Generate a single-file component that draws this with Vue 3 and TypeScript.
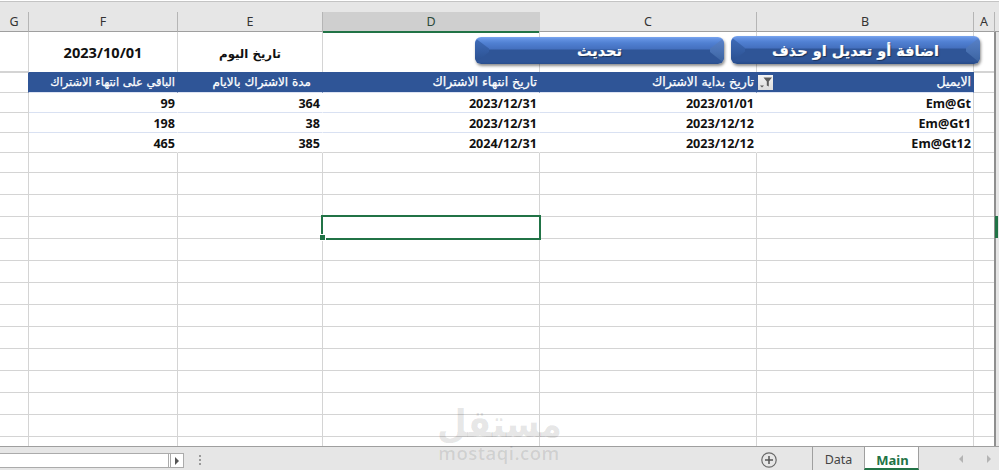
<script setup lang="ts">
interface Row {
  height: number
  kind: 'title' | 'head' | 'data' | 'last' | 'grid'
  cells: string[]
}

const columns: string[] = ['G', 'F', 'E', 'D', 'C', 'B', 'A']
const widths: number[] = [29, 149, 145, 217, 217, 217, 21]

const rows: Row[] = [
  { height: 40, kind: 'title', cells: ['', '2023/10/01', 'تاريخ اليوم', '', '', '', ''] },
  { height: 21, kind: 'head', cells: ['', 'الباقي على انتهاء الاشتراك', 'مدة الاشتراك بالايام', 'تاريخ انتهاء الاشتراك', 'تاريخ بداية الاشتراك', 'الايميل', ''] },
  { height: 20, kind: 'data', cells: ['', '99', '364', '2023/12/31', '2023/01/01', 'Em@Gt', ''] },
  { height: 20, kind: 'data', cells: ['', '198', '38', '2023/12/31', '2023/12/12', 'Em@Gt1', ''] },
  { height: 20, kind: 'last', cells: ['', '465', '385', '2024/12/31', '2023/12/12', 'Em@Gt12', ''] },
  { height: 20, kind: 'grid', cells: Array(7).fill('') },
  ...Array.from({ length: 13 }, (): Row => ({ height: 22, kind: 'grid', cells: Array(7).fill('') })),
]

const gridColumns = widths.map((w) => `${w}px`).join(' ')
const gridRows = rows.map((r) => `${r.height}px`).join(' ')
const selectedRow = 8
const selectedCol = 3
</script>

<template>
  <div class="excel">
    <div class="top-strip"></div>

    <div class="col-headers">
      <div class="col-grid" :style="{ gridTemplateColumns: gridColumns }">
        <div v-for="c in columns" :key="c" class="col-head" :class="{ active: c === 'D' }">{{ c }}</div>
      </div>
      <div class="corner"></div>
    </div>

    <div class="sheet-wrap">
      <div class="sheet" :style="{ gridTemplateColumns: gridColumns, gridTemplateRows: gridRows }">
        <template v-for="(row, r) in rows" :key="r">
          <div
            v-for="(text, c) in row.cells"
            :key="c"
            class="cell"
            :class="[row.kind, 'col-' + columns[c], { margin: c === 0 || c === 6 }]"
          >
            <span v-if="text" :class="{ ar: /[\u0600-\u06FF]/.test(text) }">{{ text }}</span>
            <span v-if="r === 1 && c === 5" class="filter">
              <svg width="15" height="15" viewBox="0 0 15 15">
                <path d="M5.500 2.500h8.500l-3.200 4v5l-2-1v-4z" fill="#5c5c5c" />
                <path d="M2 10.500h4l-2 2z" fill="#5c5c5c" />
              </svg>
            </span>
            <span v-if="r === selectedRow && c === selectedCol" class="selection"><i class="handle"></i></span>
          </div>
        </template>
      </div>

      <div class="track"><i class="mark"></i></div>

      <button class="shape shape-refresh" type="button">تحديث</button>
      <button class="shape shape-edit" type="button">اضافة أو تعديل او حذف</button>
    </div>

    <div class="bar">
      <div class="hscroll">
        <div class="hthumb"></div>
        <div class="harrow"><i></i></div>
      </div>
      <div class="dots"><i></i><i></i><i></i></div>
      <div class="spacer"></div>
      <svg class="plus" width="18" height="18" viewBox="0 0 18 18">
        <circle cx="9" cy="9" r="7.200" fill="none" stroke="#6a6a6a" stroke-width="1.200" />
        <path d="M9 5v8M5 9h8" stroke="#555" stroke-width="1.500" />
      </svg>
      <div class="tab">Data</div>
      <div class="tab current">Main</div>
      <div class="nav">
        <i class="tri left"></i>
        <i class="tri right"></i>
      </div>
    </div>

    <div class="watermark">
      <div class="wm-ar">مستقل</div>
      <div class="wm-en">mostaqi.com</div>
    </div>
  </div>
</template>

<style>
html,
body {
  margin: 0;
  background: #fff;
  overflow: hidden;
}
</style>

<style scoped>
.excel {
  position: relative;
  width: 999px;
  height: 470px;
  overflow: hidden;
  display: flex;
  flex-direction: column;
  background: #fff;
  font-family: "Noto Sans", "DejaVu Sans", sans-serif;
  color: #111;
}
.top-strip {
  height: 11px;
  background: #e6e6e6;
  border-top: 1px solid #c4c4c4;
  box-sizing: border-box;
  flex: none;
  margin-top: 1px;
}
.col-headers {
  display: flex;
  height: 20px;
  flex: none;
  background: #e6e6e6;
}
.col-grid {
  display: grid;
}
.corner {
  flex: 1;
  border-bottom: 1px solid #9f9f9f;
}
.col-head {
  box-sizing: border-box;
  border-right: 1px solid #b5b5b5;
  border-bottom: 1px solid #9f9f9f;
  text-align: center;
  font: 12.5px/19px "Noto Sans", sans-serif;
  color: #333;
}
.col-head.active {
  background: #cfcfcf;
  border-bottom: 2px solid #217346;
  color: #2b4a3a;
  border-right-color: #cfcfcf;
  margin-bottom: -1px;
}
.sheet-wrap {
  position: relative;
  flex: 1;
  display: flex;
  min-height: 0;
  overflow: hidden;
}
.sheet {
  display: grid;
  flex: none;
}
.track {
  flex: 1;
  background: #e6e6e6;
  border-left: 2px solid #8f8f8f;
  margin-left: -1px;
  position: relative;
}
.mark {
  position: absolute;
  top: 184px;
  left: -1px;
  width: 3px;
  height: 22px;
  background: #217346;
}
.cell {
  box-sizing: border-box;
  position: relative;
  border-right: 1px solid #d4d4d4;
  border-bottom: 1px solid #d4d4d4;
  text-align: right;
  font-size: 12.6px;
  font-weight: 700;
  line-height: 19px;
  padding-right: 2px;
  white-space: nowrap;
}
.ar {
  font-family: "DejaVu Sans", sans-serif;
  font-size: 12.500px;
}
.title {
  border-bottom: none;
  text-align: center;
  line-height: 41px;
  padding-right: 0;
  font-size: 14.600px;
}
.title .ar {
  font-size: 11.800px;
}
.title.margin {
  border-bottom: 1px solid #d4d4d4;
}
.head {
  background: #2f5597;
  color: #fff;
  border-color: #2f5597;
  border-bottom-color: #dde3f3;
}
.head .ar {
  font-weight: 400;
  -webkit-text-stroke: 0.25px #fff;
}
.head.col-F .ar {
  font-size: 11.400px;
}
.head.col-E .ar {
  font-size: 12px;
}
.head.margin {
  background: #fff;
  border-top: 1px solid #d4d4d4;
  border-bottom-color: #d4d4d4;
  border-right-color: #d4d4d4;
}
.head.col-G {
  border-right-color: #2f5597;
}
.head.col-E {
  padding-right: 11px;
}
.data {
  border-right-color: transparent;
  border-bottom-color: #d9e1f2;
  line-height: 21px;
}
.last {
  border-right-color: transparent;
  line-height: 21px;
}
.data.margin,
.last.margin,
.data.col-B,
.last.col-B {
  border-right-color: #d4d4d4;
}
.data.margin {
  border-bottom-color: #d4d4d4;
}
.filter {
  position: absolute;
  left: 1px;
  top: 3px;
  width: 15px;
  height: 15px;
  background: linear-gradient(#f4f4f4, #dcdcdc);
  display: flex;
}
.selection {
  position: absolute;
  left: -2px;
  top: -2px;
  right: -2px;
  bottom: -2px;
  border: 2px solid #217346;
  z-index: 2;
}
.handle {
  position: absolute;
  left: -3px;
  bottom: -3px;
  width: 5px;
  height: 5px;
  background: #217346;
  border: 1px solid #fff;
  border-left: none;
  box-sizing: content-box;
}
.shape {
  position: absolute;
  top: 4px;
  height: 28px;
  box-sizing: border-box;
  border: none;
  padding: 1px 0 0;
  border-radius: 6px;
  color: #fff;
  font: 700 14.500px/24px "DejaVu Sans", sans-serif;
  text-shadow: 1px 1px 1px rgba(0, 0, 0, 0.45);
  -webkit-text-stroke: 0.2px #fff;
  background:
    linear-gradient(#7aa6ef 0, #6492e2 2px, #5080d2 6px, #4470bf 12px, #2f5597 13px, #2f5597 25px, #264a87 28px);
  box-shadow: 1px 2px 3px rgba(0, 0, 0, 0.45);
}
.shape::before,
.shape::after {
  content: "";
  position: absolute;
  top: 1px;
  bottom: 1px;
  width: 14px;
}
.shape::before {
  left: 0;
  border-radius: 6px 0 0 6px;
  background: linear-gradient(#3f6cb9, #2a4f8e);
  clip-path: polygon(0 0, 100% 42%, 100% 56%, 0 100%);
}
.shape::after {
  right: 0;
  border-radius: 0 6px 6px 0;
  background: linear-gradient(#5a83ca, #3a629f);
  clip-path: polygon(100% 0, 0 42%, 0 56%, 100% 100%);
}
.shape-refresh {
  left: 475px;
  width: 249px;
  top: 5px;
  height: 27px;
}
.shape-edit {
  left: 731px;
  width: 249px;
}
.bar {
  box-sizing: border-box;
  flex: none;
  height: 24px;
  background: #e6e6e6;
  border-top: 1px solid #9f9f9f;
  display: flex;
  align-items: flex-start;
}
.hscroll {
  display: flex;
  margin-top: 6px;
  height: 15px;
  width: 184px;
  box-sizing: border-box;
  border: 1px solid #ababab;
  background: #fff;
  border-left: none;
}
.hthumb {
  flex: 1;
  border-right: 1px solid #ababab;
  margin-right: 1px;
}
.harrow {
  width: 12px;
  border-left: 1px solid #ababab;
  display: flex;
  align-items: center;
  justify-content: center;
}
.harrow i {
  border-left: 4px solid #555;
  border-top: 4px solid transparent;
  border-bottom: 4px solid transparent;
}
.dots {
  margin: 8px 0 0 15px;
  display: flex;
  flex-direction: column;
  gap: 2px;
}
.dots i {
  width: 2px;
  height: 2px;
  background: #9a9a9a;
}
.spacer {
  flex: 1;
}
.plus {
  margin: 4px 34px 0 0;
}
.tab {
  box-sizing: border-box;
  height: 23px;
  width: 52px;
  border-left: 1px solid #9f9f9f;
  text-align: center;
  font: 12.500px/26px "Noto Sans", sans-serif;
  color: #444;
}
.tab.current {
  width: 55px;
  padding-left: 2px;
  background: #fff;
  border-right: 1px solid #9f9f9f;
  border-bottom: 2px solid #217346;
  font-size: 13px;
  font-weight: 700;
  color: #217346;
}
.nav {
  width: 80px;
  height: 23px;
  display: flex;
  align-items: center;
  justify-content: flex-end;
  gap: 24px;
  padding-right: 8px;
  box-sizing: border-box;
}
.tri {
  border-top: 4px solid transparent;
  border-bottom: 4px solid transparent;
}
.tri.left {
  border-right: 4px solid #b4b4b4;
}
.tri.right {
  border-left: 4px solid #b4b4b4;
}
.watermark {
  position: absolute;
  left: 430px;
  top: 402px;
  width: 138px;
  text-align: center;
  color: rgba(0, 0, 0, 0.1);
  pointer-events: none;
}
.wm-ar {
  font: 700 38px/44px "DejaVu Sans", sans-serif;
  height: 44px;
  transform: scaleX(0.9);
}
.wm-en {
  font: 600 18.500px/14px "Open Sans", sans-serif;
  letter-spacing: 0.5px;
}
</style>
